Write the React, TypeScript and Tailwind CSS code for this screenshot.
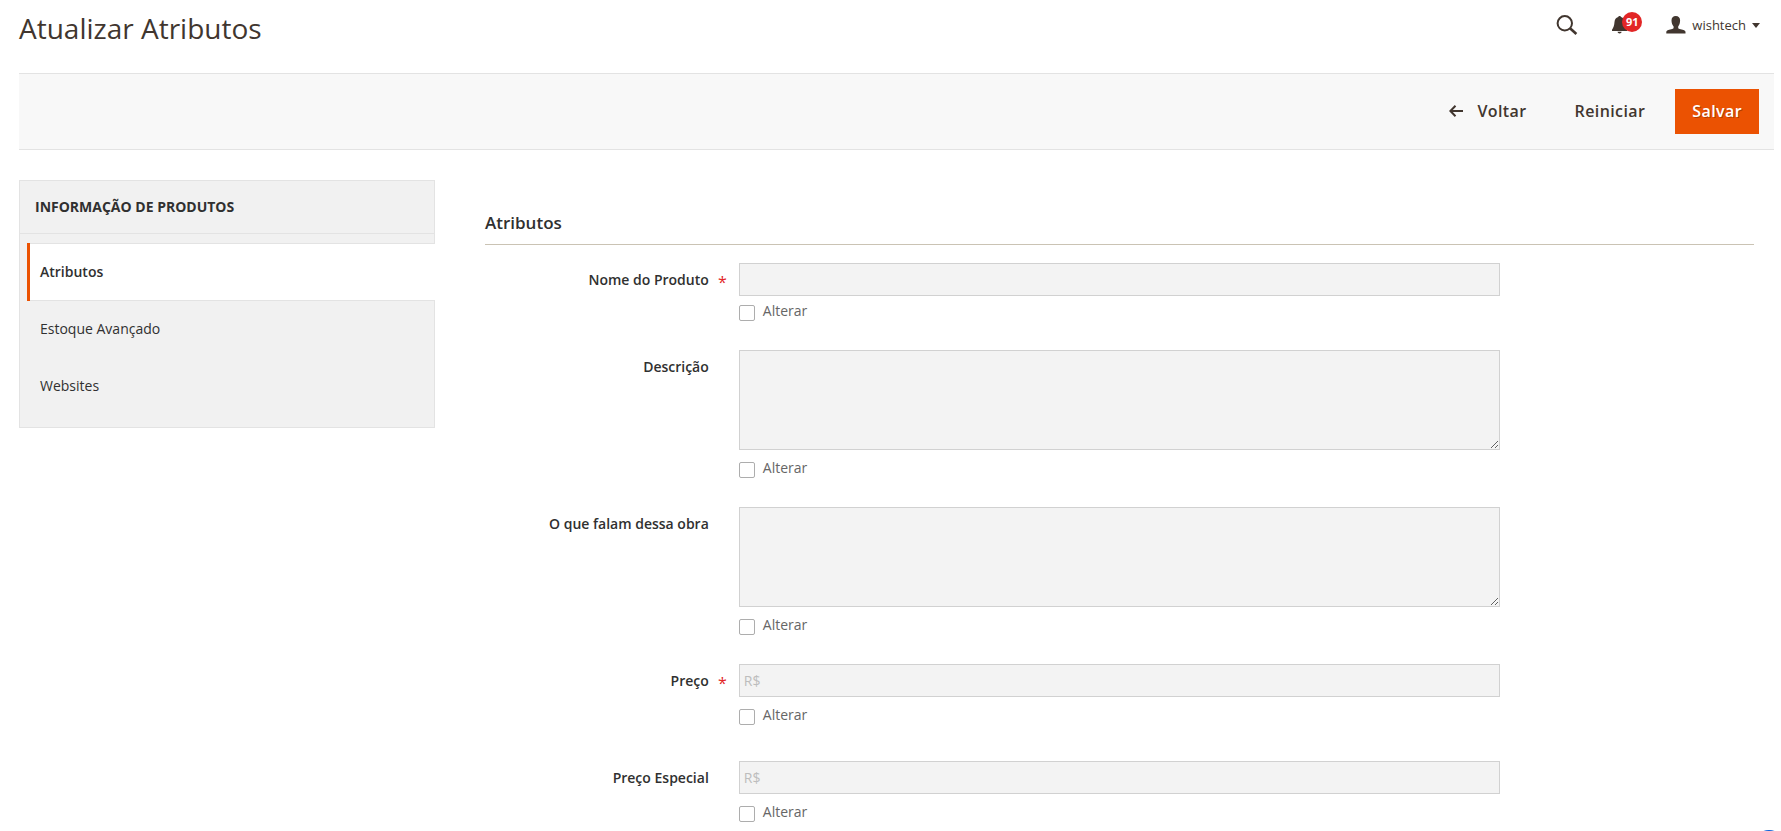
import { ReactNode } from "react";

type FieldType = "text" | "textarea" | "price";

type Field = {
  id: string;
  label: string;
  type: FieldType;
  required?: boolean;
};

const fields: Field[] = [
  { id: "name", label: "Nome do Produto", type: "text", required: true },
  { id: "description", label: "Descrição", type: "textarea" },
  { id: "reviews", label: "O que falam dessa obra", type: "textarea" },
  { id: "price", label: "Preço", type: "price", required: true },
  { id: "special-price", label: "Preço Especial", type: "price" },
];

const tabs = ["Atributos", "Estoque Avançado", "Websites"];

const rowSpacing = {
  text: "mb-[29px]",
  textarea: "mb-[29px]",
  price: "mb-9",
};

const checkSpacing = {
  text: "mt-[9px]",
  textarea: "mt-3",
  price: "mt-3",
};

const controlClass =
  "block w-full rounded-none border border-[#d1d1d1] bg-[#f3f3f3] px-1 text-sm text-[#303030] placeholder:text-[#bdbdbd]";

function SearchIcon() {
  return (
    <svg width="22" height="20" viewBox="0 0 22 20" fill="none" stroke="#41362f">
      <circle cx="8.8" cy="8.3" r="7.2" strokeWidth="2" />
      <path d="M14 13.2 L20.4 19" strokeWidth="2.6" />
    </svg>
  );
}

function BellIcon() {
  return (
    <svg width="16" height="18" viewBox="0 0 16 18" fill="#41362f">
      <path d="M7.6 0c.8 0 1.3.5 1.4 1.1 2.300.6 3.500 2.500 3.700 5 .2 3.300.9 5.600 2.500 7.700v1.200H0v-1.200c1.600-2.100 2.300-4.400 2.500-7.700.2-2.500 1.400-4.400 3.700-5C6.300.5 6.800 0 7.600 0z" />
      <path d="M5.600 15.800h4c0 .9-.9 1.700-2 1.700s-2-.8-2-1.700z" />
    </svg>
  );
}

function UserIcon() {
  return (
    <svg width="20" height="18" viewBox="0 0 20 18" fill="#41362f">
      <path d="M9.800 0c2.700 0 4.300 1.700 4.300 4.400 0 2.400-.8 4.700-1.900 6v1.500c.3.700 1 1 2.400 1.300 3.200.6 4.700 1.200 4.900 2.600V17.400H.3V15.800c.2-1.400 1.700-2 4.900-2.600 1.400-.3 2.100-.6 2.400-1.300v-1.500C6.400 9.100 5.500 6.800 5.500 4.400 5.500 1.700 7.100 0 9.800 0z" />
    </svg>
  );
}

function BackIcon() {
  return (
    <svg width="14" height="12" viewBox="0 0 14 12" fill="none" stroke="#41362f" strokeWidth="2">
      <path d="M14 6H1.500M6.500.800L1.400 6l5.100 5.200" />
    </svg>
  );
}

function ToolbarButton({ children }: { children: ReactNode }) {
  return (
    <button type="button" className="flex h-[45px] items-center gap-3.5 pb-0.5 text-base font-semibold tracking-wide text-[#41362f]">
      {children}
    </button>
  );
}

function FieldRow({ field }: { field: Field }) {
  return (
    <div className={`flex ${rowSpacing[field.type]}`}>
      <div className="flex w-1/5 justify-end pt-[7px] pr-3">
        <label htmlFor={field.id} className="text-sm leading-5 font-semibold whitespace-nowrap text-[#303030]">
          {field.label}
        </label>
        <span className="w-[18px] pt-0.5 text-right text-base leading-5 text-[#e22626]">{field.required && "*"}</span>
      </div>
      <div className="w-3/5">
        {field.type === "textarea" ? (
          <textarea id={field.id} className={`${controlClass} h-[100px] resize-y`} disabled />
        ) : (
          <input
            id={field.id}
            type="text"
            placeholder={field.type === "price" ? "R$" : undefined}
            className={`${controlClass} h-[33px]`}
            disabled
          />
        )}
        <div className={`flex h-4 items-center gap-2 ${checkSpacing[field.type]}`}>
          <input
            id={`${field.id}-toggle`}
            type="checkbox"
            className="size-4 appearance-none rounded-xs border border-[#adadad] bg-white checked:bg-[#41362f]"
          />
          <label htmlFor={`${field.id}-toggle`} className="pb-1 text-sm leading-4 text-[#666]">
            Alterar
          </label>
        </div>
      </div>
    </div>
  );
}

export default function App() {
  return (
    <div className="relative h-screen overflow-hidden bg-white pr-[7px] pl-[19px] font-['Open_Sans',sans-serif] text-[#303030]">
      <header className="flex h-[73px] items-start justify-between pr-[14px]">
        <h1 className="pt-2 text-[28px] leading-10 text-[#41362f]">Atualizar Atributos</h1>
        <div className="flex h-[50px] items-center">
          <button type="button" aria-label="Buscar" className="mr-[34px]">
            <SearchIcon />
          </button>
          <button type="button" aria-label="Notificações" className="relative mr-[38px]">
            <BellIcon />
            <span className="absolute -top-1 left-2.5 flex size-5 items-center justify-center rounded-full bg-[#e22626] text-[11px] font-bold text-white">
              91
            </span>
          </button>
          <button type="button" className="flex items-center text-[13px] leading-5 text-[#41362f]">
            <UserIcon />
            <span className="mr-1.5 ml-1.5">wishtech</span>
            <span className="border-x-4 border-t-5 border-x-transparent border-t-[#41362f]" />
          </button>
        </div>
      </header>

      <div className="flex items-center justify-end border-y border-[#e3e3e3] bg-[#f8f8f8] px-[15px] py-[15px]">
        <div className="mr-12">
          <ToolbarButton>
            <BackIcon />
            Voltar
          </ToolbarButton>
        </div>
        <div className="mr-[30px]">
          <ToolbarButton>Reiniciar</ToolbarButton>
        </div>
        <button
          type="button"
          className="h-[45px] bg-[#eb5202] px-[17px] pb-0.5 text-base font-semibold tracking-wide text-white text-shadow-[1px_1px_0_rgba(0,0,0,0.25)]"
        >
          Salvar
        </button>
      </div>

      <div className="flex items-start gap-[50px] pt-[30px] pr-5">
        <nav className="w-[416px] shrink-0 border border-[#e3e3e3] bg-[#f1f1f1] pb-[13px]">
          <h2 className="border-b border-[#e3e3e3] px-[15px] py-4 text-sm leading-5 font-bold uppercase">
            Informação de Produtos
          </h2>
          <ul className="pt-[9px]">
            {tabs.map((tab, index) => (
              <li key={tab}>
                {index === 0 ? (
                  <a
                    href="#atributos"
                    className="-mr-px -mb-px ml-[7px] flex h-[58px] border-l-3 border-[#eb5202] bg-white text-sm font-semibold"
                  >
                    <span className="flex flex-1 items-center border-y border-[#e3e3e3] pl-2.5">{tab}</span>
                  </a>
                ) : (
                  <a href="#" className="flex h-[57px] items-center pl-5 text-sm">
                    {tab}
                  </a>
                )}
              </li>
            ))}
          </ul>
        </nav>

        <main id="atributos" className="min-w-0 flex-1 pt-[31px]">
          <h2 className="mb-[18px] border-b border-[#cac3b4] pb-[9px] text-[17px] leading-6 font-semibold">Atributos</h2>
          <form>
            {fields.map((field) => (
              <FieldRow key={field.id} field={field} />
            ))}
          </form>
        </main>
      </div>

      {/* Floating chat launcher, peeking in from below */}
      <button
        type="button"
        aria-label="Chat"
        className="absolute right-[-3px] -bottom-[29px] size-[30px] rounded-full bg-[#0a5fd8]"
      />
    </div>
  );
}
